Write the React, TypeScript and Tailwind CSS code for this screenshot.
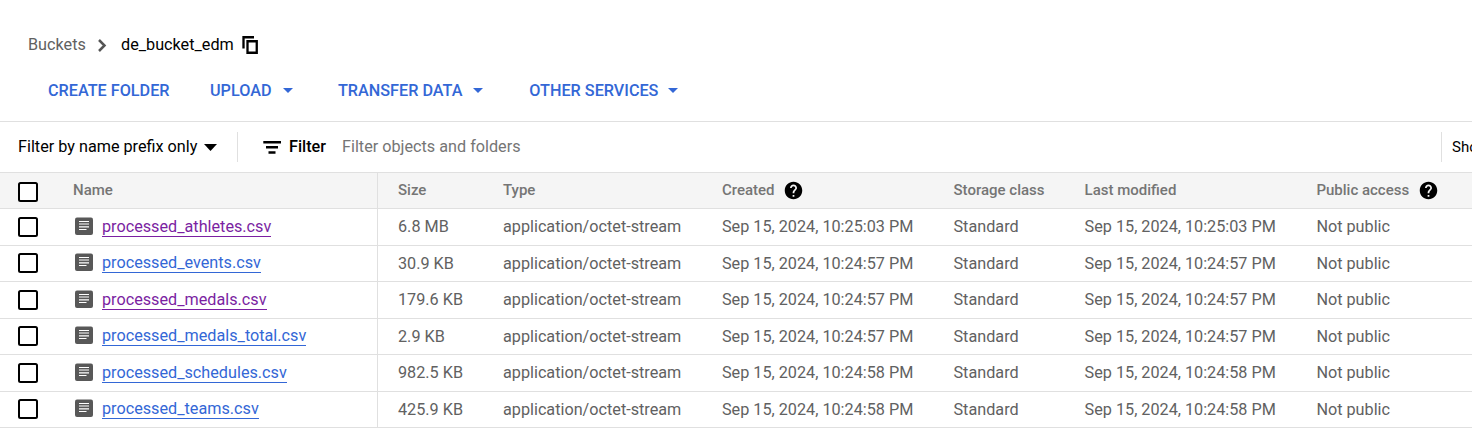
import React from "react";

const files = [
  { name: "processed_athletes.csv", size: "6.8 MB", time: "10:25:03", visited: true, h: "h-[37px]" },
  { name: "processed_events.csv", size: "30.9 KB", time: "10:24:57", visited: false, h: "h-[36px]" },
  { name: "processed_medals.csv", size: "179.6 KB", time: "10:24:57", visited: true, h: "h-[37px]" },
  { name: "processed_medals_total.csv", size: "2.9 KB", time: "10:24:57", visited: false, h: "h-[36px]" },
  { name: "processed_schedules.csv", size: "982.5 KB", time: "10:24:58", visited: false, h: "h-[37px]" },
  { name: "processed_teams.csv", size: "425.9 KB", time: "10:24:58", visited: false, h: "h-[36px]" },
];

const columns = "grid grid-cols-[378px_125px_219px_231.5px_131.1px_231.8px_155.6px]";

function Checkbox() {
  return <span className="size-5 shrink-0 rounded-[2.5px] border-2 border-black bg-white" />;
}

function Help() {
  return (
    <svg width="21" height="21" viewBox="0 0 24 24" className="-mt-[0.5px] shrink-0 fill-black">
      <path d="M12 2C6.48 2 2 6.48 2 12s4.480 10 10 10 10-4.480 10-10S17.520 2 12 2zm1 17h-2v-2h2v2zm2.070-7.750l-.9.920C13.450 12.900 13 13.500 13 15h-2v-.5c0-1.100.450-2.100 1.170-2.830l1.240-1.260c.370-.360.590-.860.590-1.410 0-1.100-.9-2-2-2s-2 .9-2 2H8c0-2.210 1.790-4 4-4s4 1.790 4 4c0 .880-.360 1.680-.930 2.250z" />
    </svg>
  );
}

function DocIcon() {
  return (
    <svg width="18" height="18" viewBox="0 0 18 18" className="shrink-0">
      <rect y=".4" width="18" height="17.600" rx="2" fill="#585858" />
      <path d="M4 4.500h10M4 7h10M4 9.800h10M4 12.500h7.500" stroke="#fff" strokeWidth="1.200" />
    </svg>
  );
}

function Caret({ className }: { className: string }) {
  return (
    <svg viewBox="0 0 12 6" preserveAspectRatio="none" className={className} fill="currentColor">
      <path d="M0 0h12L6 6z" />
    </svg>
  );
}

function Action({ label, width, gap }: { label: string; width: string; gap: string }) {
  return (
    <button className={`flex shrink-0 items-center ${width} ${gap}`}>
      <span>{label}</span>
      <Caret className="-mt-px h-[5px] w-[10px]" />
    </button>
  );
}

export default function App() {
  return (
    <div className="h-[431px] w-full overflow-hidden whitespace-nowrap bg-white font-['Roboto',sans-serif] text-[16.22px] leading-5 text-black">
      <nav className="flex h-[69px] items-start pl-7 pt-[35px]">
        <span className="w-[70px] text-[#616161]">Buckets</span>
        <svg width="9" height="13" viewBox="0 0 9 13" className="mt-[4px]">
          <path d="M1 1l5.500 5.500L1 12" fill="none" stroke="#555" strokeWidth="2.500" />
        </svg>
        <span className="ml-[14px] w-[121px]">de_bucket_edm</span>
        <svg width="17" height="18" viewBox="0 0 17 18" className="mt-px">
          <path d="M1.500 12.500V1.250H12M5.500 5.250h9.250v11.500H5.500z" fill="none" stroke="#000" strokeWidth="2.300" />
        </svg>
      </nav>

      <div className="flex h-[52px] items-start pl-12 pt-[12px] font-medium text-[#3367d6]">
        <button className="w-[162px] shrink-0 text-left">CREATE FOLDER</button>
        <Action label="UPLOAD" width="w-[128px]" gap="gap-[11px]" />
        <Action label="TRANSFER DATA" width="w-[191.3px]" gap="gap-[11px]" />
        <Action label="OTHER SERVICES" width="w-[160px]" gap="gap-[10px]" />
      </div>

      <div className="flex h-[51px] items-center border-t border-[#e0e0e0] pl-[18px]">
        <div className="flex w-[219px] shrink-0 items-center">
          <span>Filter by name prefix only</span>
          <Caret className="ml-[6.5px] mt-px h-[7px] w-[13px]" />
        </div>
        <div className="h-[30px] w-px shrink-0 bg-[#e0e0e0]" />
        <svg width="18" height="13" viewBox="0 0 18 13" className="ml-[25px] shrink-0">
          <path d="M.3 1.250H18M3 6.250h12M5.500 11.500h7" stroke="#000" strokeWidth="2.300" />
        </svg>
        <span className="ml-2 w-[53px] shrink-0 font-medium">Filter</span>
        <span className="text-[#757575]">Filter objects and folders</span>
        <div className="ml-auto flex w-[31px] shrink-0 items-center">
          <div className="h-[30px] w-px shrink-0 bg-[#e0e0e0]" />
          <span className="ml-[10px] text-[15px]">Show</span>
        </div>
      </div>

      <div className={`${columns} h-[37px] border-y border-[#e0e0e0] bg-[#f5f5f5] text-[15px] font-medium text-[#757575]`}>
        <div className="flex items-start border-r border-[#e0e0e0] pl-[18px] pt-[9px]">
          <Checkbox />
          <span className="-mt-[2px] ml-[35px]">Name</span>
        </div>
        <div className="pl-5 pt-[7px]">Size</div>
        <div className="pt-[7px]">Type</div>
        <div className="flex items-start gap-[8px] pt-[7px]">Created <Help /></div>
        <div className="pt-[7px]">Storage class</div>
        <div className="pt-[7px]">Last modified</div>
        <div className="flex items-start gap-[8.5px] pt-[7px]">Public access <Help /></div>
      </div>

      {files.map((f) => (
        <div key={f.name} className={`${columns} ${f.h} border-b border-[#e0e0e0] text-[#616161]`}>
          <div className="flex items-end border-r border-[#e0e0e0] pb-[8px] pl-[18px]">
            <Checkbox />
            <span className="mb-[2px] ml-[37px] flex"><DocIcon /></span>
            <a className={`ml-[9px] h-5 border-b leading-[19px] ${f.visited ? "border-[#7b1fa2] text-[#7b1fa2]" : "border-[#3367d6] text-[#3367d6]"}`}>
              {f.name}
            </a>
          </div>
          <div className="pl-5 pt-[8px]">{f.size}</div>
          <div className="pt-[8px]">application/octet-stream</div>
          <div className="pt-[8px]">Sep 15, 2024, {f.time} PM</div>
          <div className="pt-[8px]">Standard</div>
          <div className="pt-[8px]">Sep 15, 2024, {f.time} PM</div>
          <div className="pt-[8px]">Not public</div>
        </div>
      ))}
    </div>
  );
}
